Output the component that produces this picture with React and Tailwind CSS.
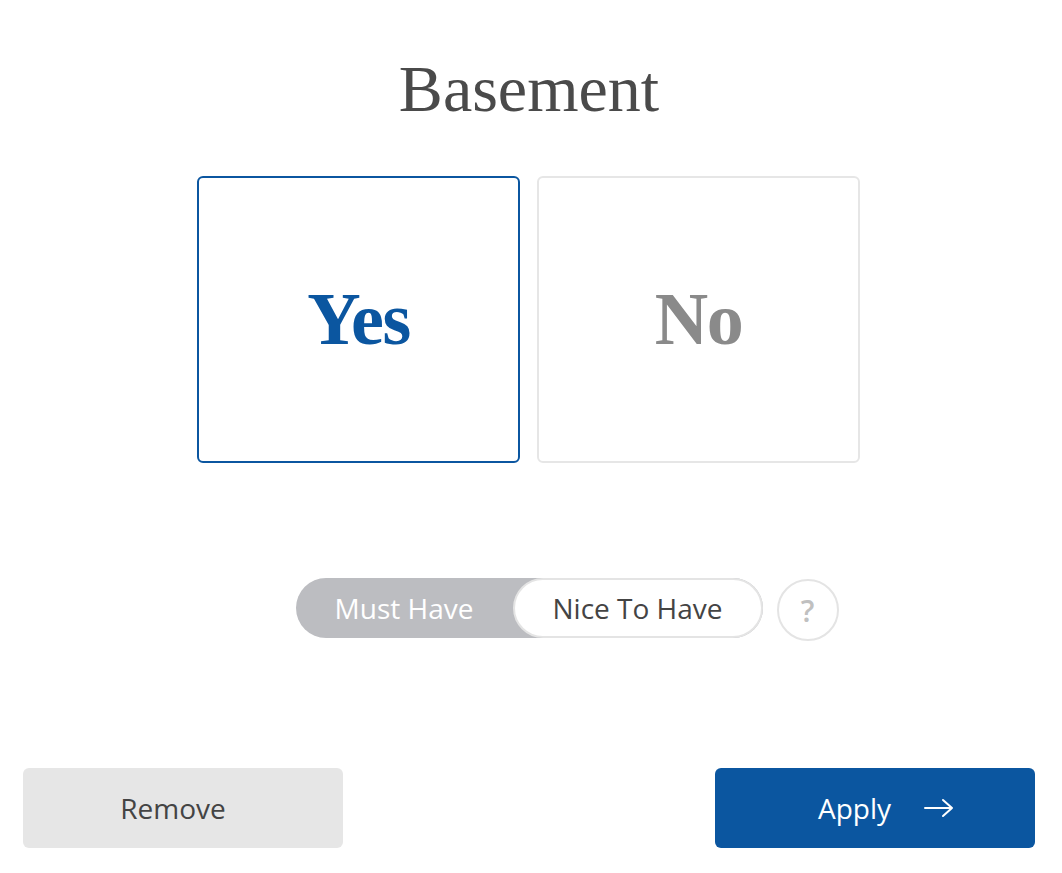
import React, { useState } from 'react'

export default function App() {
  const [answer, setAnswer] = useState('yes')
  const [priority, setPriority] = useState('nice')

  const sans = { fontFamily: '"Open Sans", "Liberation Sans", sans-serif' }

  return (
    <div className="flex flex-col items-center w-[1062px] h-[873px] bg-white" style={sans}>
      {/* Title */}
      <h1
        className="pt-[56px] text-[66px] leading-none text-[#4a4a4a] ml-[-4px]"
        style={{ fontFamily: '"Liberation Serif", serif' }}
      >
        Basement
      </h1>

      {/* Yes / No cards */}
      <div className="flex gap-[17px] mt-[54px] ml-[-5px]">
        <button
          onClick={() => setAnswer('yes')}
          className={`w-[323px] h-[287px] rounded-[6px] border-2 flex items-center justify-center text-[74px] font-bold tracking-[-0.02em] ${
            answer === 'yes' ? 'border-[#0b56a0] text-[#0b56a0]' : 'border-[#e6e6e6] text-[#8a8a8a]'
          }`}
          style={{ fontFamily: '"Liberation Serif", serif' }}
        >
          Yes
        </button>
        <button
          onClick={() => setAnswer('no')}
          className={`w-[323px] h-[287px] rounded-[6px] border-2 flex items-center justify-center text-[74px] font-bold tracking-[-0.02em] ${
            answer === 'no' ? 'border-[#0b56a0] text-[#0b56a0]' : 'border-[#e6e6e6] text-[#8a8a8a]'
          }`}
          style={{ fontFamily: '"Liberation Serif", serif' }}
        >
          No
        </button>
      </div>

      {/* Priority toggle */}
      <div className="relative mt-[115px] ml-[-4px]">
        <div className="flex w-[467px] h-[60px] rounded-full bg-[#bcbdc1]">
          <button
            onClick={() => setPriority('must')}
            className={`w-[217px] h-full rounded-full text-[28px] ${
              priority === 'must' ? 'bg-white border-2 border-[#e4e4e4] text-[#444]' : 'text-white'
            }`}
          >
            Must Have
          </button>
          <button
            onClick={() => setPriority('nice')}
            className={`flex-1 h-full rounded-full text-[28px] ${
              priority === 'nice' ? 'bg-white border-2 border-[#e4e4e4] text-[#444]' : 'text-white'
            }`}
          >
            Nice To Have
          </button>
        </div>
        <button className="absolute left-full top-[1px] ml-[14px] w-[62px] h-[62px] rounded-full border-2 border-[#e4e4e4] text-[30px] font-semibold text-[#c0c0c0] flex items-center justify-center">
          ?
        </button>
      </div>

      {/* Footer buttons */}
      <div className="flex justify-between w-full pl-[23px] pr-[27px] mt-[130px]">
        <button className="w-[320px] h-[80px] rounded-[6px] bg-[#e6e6e6] text-[28px] text-[#444] pr-[20px]">
          Remove
        </button>
        <button className="w-[320px] h-[80px] rounded-[6px] bg-[#0b56a0] text-[28px] text-white flex items-center justify-center gap-[33px] pl-[22px]">
          <span>Apply</span>
          <svg width="30" height="20" viewBox="0 0 30 20" fill="none" stroke="white" strokeWidth="2" strokeLinecap="round" strokeLinejoin="round">
            <path d="M1 10h27M19 2l9 8-9 8" />
          </svg>
        </button>
      </div>
    </div>
  )
}
